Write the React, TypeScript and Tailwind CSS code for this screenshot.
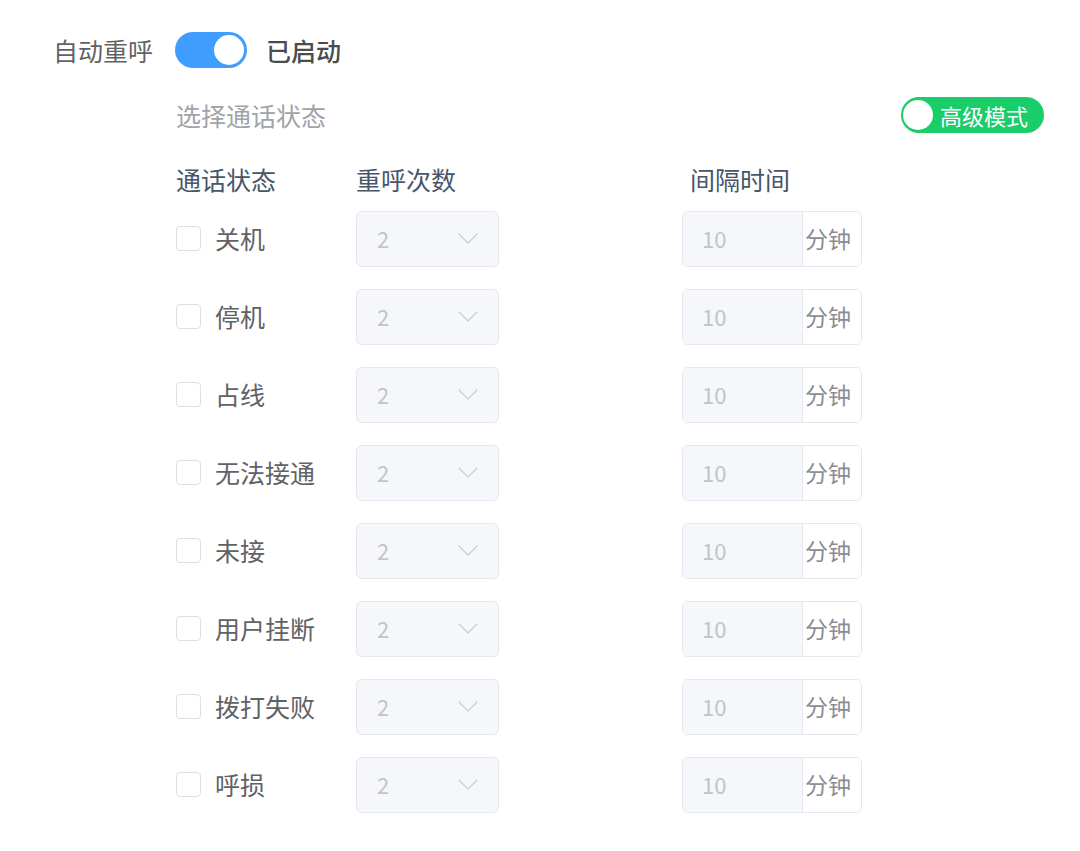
import React from "react";

const rows = ["关机", "停机", "占线", "无法接通", "未接", "用户挂断", "拨打失败", "呼损"];

const Chevron = () => (
  <svg width="20" height="11" viewBox="0 0 20 11" fill="none">
    <path d="M1 1l9 9 9-9" stroke="#c8ccd3" strokeWidth="1.2" strokeLinecap="round" strokeLinejoin="round" />
  </svg>
);

const Row = ({ label }: { label: string }) => (
  <div className="flex items-center h-[57px]">
    <div className="w-[180px] flex items-center">
      <span className="w-[25px] h-[25px] rounded-[4px] border border-[#dcdfe6] bg-white" />
      <span className="ml-[14px] text-[25px] leading-none text-[#606266]">{label}</span>
    </div>
    <div className="w-[326px]">
      <div className="w-[143px] h-[56px] rounded-[6px] border border-[#e4e7ed] bg-[#f5f7fa] flex items-center justify-between pl-[20px] pr-[20px]">
        <span className="text-[22px] text-[#c0c4cc]">2</span>
        <Chevron />
      </div>
    </div>
    <div className="flex h-[56px] w-[180px] rounded-[6px] border border-[#e4e7ed] overflow-hidden">
      <div className="w-[120px] bg-[#f5f7fa] flex items-center pl-[19px] border-r border-[#e4e7ed]">
        <span className="text-[22px] text-[#c0c4cc]">10</span>
      </div>
      <div className="flex-1 bg-white flex items-center pl-[2px]">
        <span className="text-[23px] text-[#8a8d93] leading-none">分钟</span>
      </div>
    </div>
  </div>
);

export default function App() {
  return (
    <div
      className="w-[1080px] h-[851px] bg-white pt-[32px] pl-[53px] pr-[36px]"
      style={{ fontFamily: '"Noto Sans CJK SC", "Noto Sans", sans-serif' }}
    >
      <div className="flex items-center h-[36px]">
        <span className="text-[25px] leading-none text-[#606266]">自动重呼</span>
        <div className="ml-[22px] w-[72px] h-[36px] rounded-full bg-[#409eff] flex items-center justify-end pr-[3px]">
          <span className="w-[30px] h-[30px] rounded-full bg-white" />
        </div>
        <span className="ml-[19px] text-[25px] leading-none font-medium text-[#4a4c50]">已启动</span>
      </div>

      <div className="pl-[123px]">
        <div className="mt-[29px] flex items-center justify-between h-[36px]">
          <span className="text-[25px] leading-none text-[#a0a3a8]">选择通话状态</span>
          <div className="w-[143px] h-[36px] rounded-full bg-[#19cd68] flex items-center pl-[2px]">
            <span className="w-[30px] h-[30px] rounded-full bg-white" />
            <span className="ml-[7px] text-[22px] leading-none text-white">高级模式</span>
          </div>
        </div>

        <div className="mt-[28px] flex items-center h-[36px] text-[25px] leading-none text-[#475669]">
          <span className="w-[180px]">通话状态</span>
          <span className="w-[326px]">重呼次数</span>
          <span className="ml-[8px]">间隔时间</span>
        </div>

        <div className="mt-[13px] flex flex-col gap-[21px]">
          {rows.map((r) => (
            <Row key={r} label={r} />
          ))}
        </div>
      </div>
    </div>
  );
}
